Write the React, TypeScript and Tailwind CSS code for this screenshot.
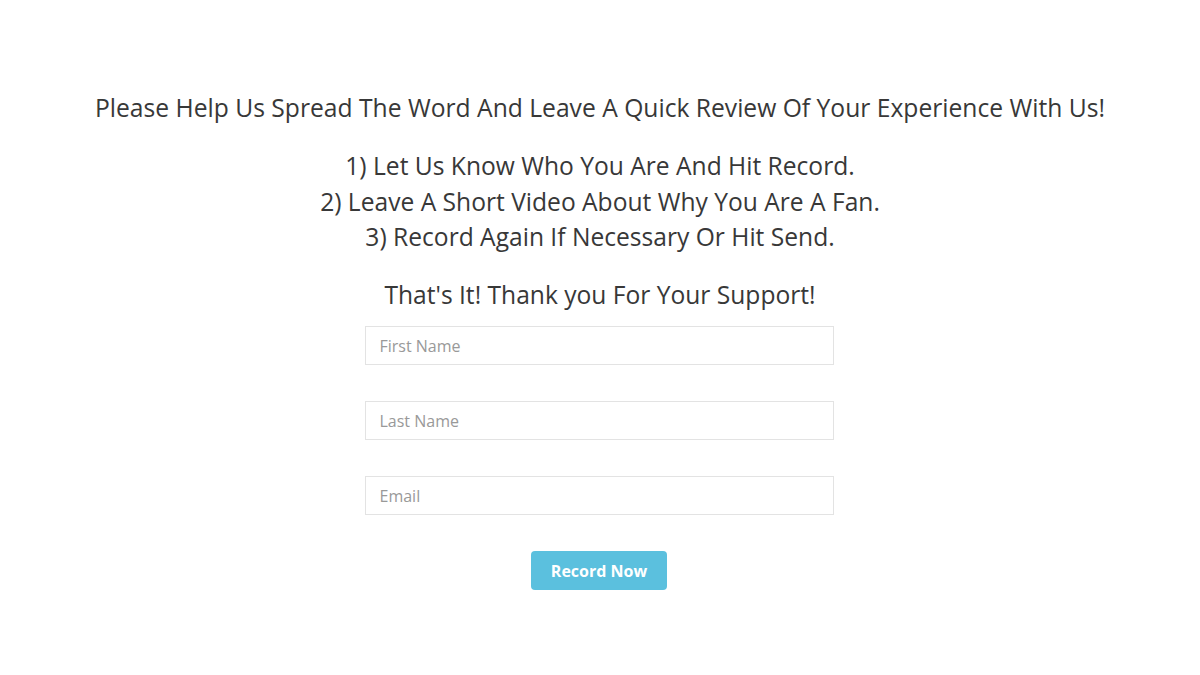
export default function App() {
  return (
    <div className="min-h-[675px] bg-white font-['Open_Sans',sans-serif] text-[#383838] flex flex-col items-center pt-[90px]">
      <h1 className="text-[24.65px] leading-[36px] text-center">
        Please Help Us Spread The Word And Leave A Quick Review Of Your Experience With Us!
      </h1>
      <div className="mt-[22px] text-[24.6px] leading-[35.5px] text-center">
        <p>1) Let Us Know Who You Are And Hit Record.</p>
        <p>2) Leave A Short Video About Why You Are A Fan.</p>
        <p>3) Record Again If Necessary Or Hit Send.</p>
      </div>
      <p className="mt-[22px] text-[24.6px] leading-[36px] text-center">That's It! Thank you For Your Support!</p>
      <form className="mt-[13px] w-[469px] mr-[2px] flex flex-col gap-[36px]">
        <input
          type="text"
          placeholder="First Name"
          className="h-[39px] w-full border border-[#e3e3e3] px-[14px] pt-[1px] text-[16px] placeholder:text-[#999] outline-none"
        />
        <input
          type="text"
          placeholder="Last Name"
          className="h-[39px] w-full border border-[#e3e3e3] px-[14px] pt-[1px] text-[16px] placeholder:text-[#999] outline-none"
        />
        <input
          type="email"
          placeholder="Email"
          className="h-[39px] w-full border border-[#e3e3e3] px-[14px] pt-[1px] text-[16px] placeholder:text-[#999] outline-none"
        />
      </form>
      <button className="mt-[36px] mr-[2px] h-[39px] w-[136px] rounded-[4px] bg-[#5bc0de] pt-[1px] text-white text-[16px] font-bold">
        Record Now
      </button>
    </div>
  );
}
